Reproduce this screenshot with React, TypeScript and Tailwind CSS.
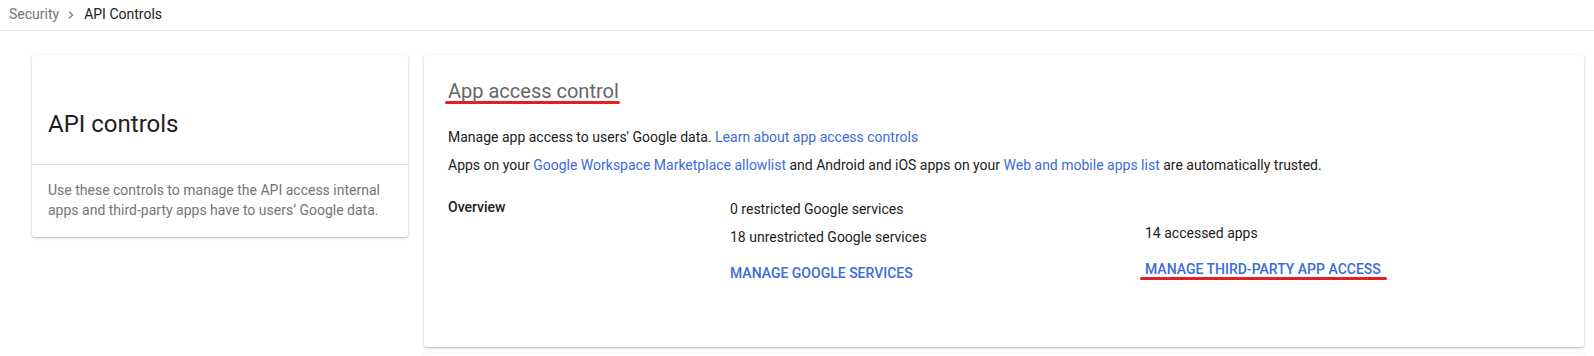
const font = { fontFamily: "Roboto, 'Liberation Sans', sans-serif" };

function Breadcrumb() {
  return (
    <div className="flex h-[31px] items-start border-b border-[#e0e0e0] pl-[9px] pt-[4px] text-[14px] leading-5">
      <span className="text-[#757575]">Security</span>
      <svg
        className="mx-[9px] mt-[7px] h-[8px] w-[6px] text-[#757575]"
        viewBox="0 0 6 8"
        fill="none"
        stroke="currentColor"
        strokeWidth="1.2"
      >
        <path d="M1 0.8 L4.6 4 L1 7.2" />
      </svg>
      <span className="ml-[1px] text-[#202124]">API Controls</span>
    </div>
  );
}

function SideCard() {
  return (
    <div className="h-[182px] w-[376px] shrink-0 rounded-[2px] bg-white shadow-[0_1px_3px_rgba(0,0,0,0.22),0_1px_1px_rgba(0,0,0,0.08)]">
      <div className="flex h-[110px] items-end border-b border-[#e0e0e0] px-4 pb-6">
        <h1 className="text-[24px] leading-8 font-normal text-[#212121]">API controls</h1>
      </div>
      <p className="px-4 pt-[15px] text-[14px] leading-5 text-[#757575]">
        Use these controls to manage the API access internal apps and third-party apps have to users’ Google data.
      </p>
    </div>
  );
}

function Link({ children }: { children: React.ReactNode }) {
  return <a className="text-[#3d6bd8]">{children}</a>;
}

function AccessCard() {
  return (
    <div className="h-[292px] rounded-[2px] bg-white px-6 pt-6 shadow-[0_1px_3px_rgba(0,0,0,0.22),0_1px_1px_rgba(0,0,0,0.08)]">
      <h2 className="text-[20px] leading-6 font-normal text-[#666666]">App access control</h2>
      <div className="-ml-[3px] mt-[-2px] h-[3px] w-[175px] rounded-full bg-[#e31e24]" />

      <div className="mt-[23px] text-[14px] leading-5 text-[#212121]">
        <p>
          Manage app access to users' Google data. <Link>Learn about app access controls</Link>
        </p>
        <p className="mt-2">
          Apps on your <Link>Google Workspace Marketplace allowlist</Link> and Android and iOS apps on your{" "}
          <Link>Web and mobile apps list</Link> are automatically trusted.
        </p>
      </div>

      <div className="mt-[22px] flex text-[14px] leading-5 text-[#212121]">
        <div className="w-[282px] font-medium">Overview</div>
        <div className="w-[415px] pt-[1.5px]">
          <div>0 restricted Google services</div>
          <div className="mt-2">18 unrestricted Google services</div>
          <div className="mt-4 font-medium text-[#3d6bd8] uppercase">Manage Google services</div>
        </div>
        <div className="pt-[26px]">
          <div>14 accessed apps</div>
          <div className="mt-4 inline-flex flex-col">
            <span className="font-medium text-[#3d6bd8] uppercase">Manage third-party app access</span>
            <div className="-ml-[5px] mt-[-2px] h-[3px] w-[247px] rounded-full bg-[#e31e24]" />
          </div>
        </div>
      </div>
    </div>
  );
}

export default function App() {
  return (
    <div className="h-[356px] overflow-hidden bg-white" style={font}>
      <Breadcrumb />
      <div className="flex gap-4 pl-8 pr-[10px] pt-6">
        <SideCard />
        <div className="flex min-w-0 flex-1 flex-col">
          <AccessCard />
          <div className="mt-[6px] h-[40px] rounded-[2px] bg-white shadow-[0_1px_3px_rgba(0,0,0,0.22),0_1px_1px_rgba(0,0,0,0.08)]" />
        </div>
      </div>
    </div>
  );
}
